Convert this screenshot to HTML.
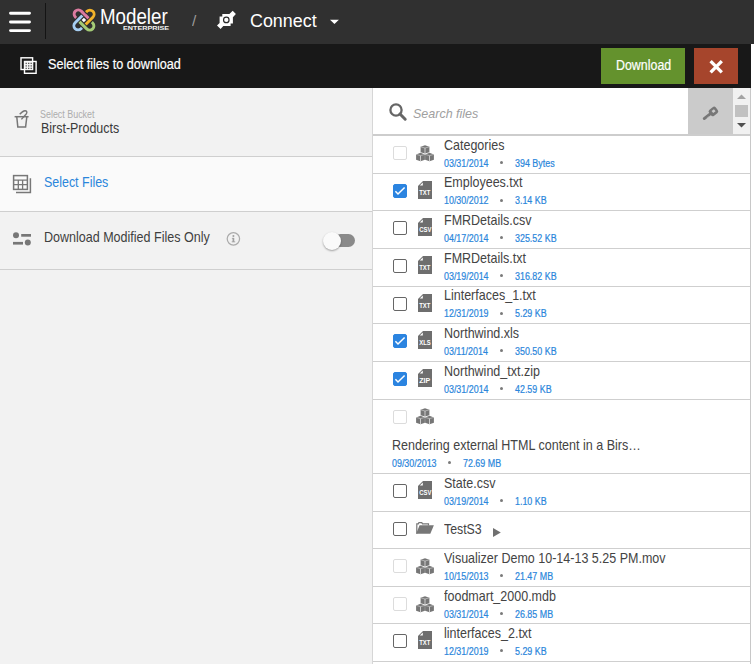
<!DOCTYPE html>
<html><head><meta charset="utf-8">
<style>
*{margin:0;padding:0;box-sizing:border-box}
html,body{width:754px;height:664px;overflow:hidden;background:#fff;font-family:"Liberation Sans",sans-serif}
.a{position:absolute}
.t{position:absolute;white-space:nowrap;line-height:1}
#hdr{left:0;top:0;width:754px;height:44px;background:#303030}
#tb{left:0;top:44px;width:751px;height:44px;background:#181818}
#lp{left:0;top:88px;width:372px;height:576px;background:#f2f2f2}
#rp{left:372px;top:88px;width:379px;height:576px;background:#fff;border-left:1px solid #d6d6d6;border-right:1px solid #c8c8c8}
.hl{position:absolute;height:1px;background:#cfcfcf}
.cb{position:absolute;width:14px;height:14px;border:1.5px solid #666;border-radius:2px;background:#fff}
.cb.d{border-color:#dcdcdc}
.cb.c{background:#2b84e0;border-color:#2b84e0}
.nm{font-size:13px;color:#333}
.dt{font-size:10px;color:#2a86db}
</style></head><body>
<!-- header -->
<div id="hdr" class="a"></div>
<svg class="a" style="left:0;top:0" width="44" height="44" viewBox="0 0 44 44"><path d="M10.5,13.3 H29.5 M10.5,22 H29.5 M10.5,30.6 H29.5" stroke="#fff" stroke-width="2.9" stroke-linecap="round"/></svg>
<div class="a" style="left:45px;top:3px;width:1px;height:36px;background:#141414"></div>

<svg class="a" style="left:68px;top:4px" width="32" height="32" viewBox="0 0 32 32">
 <g fill="none" stroke-linecap="butt"><path d="M8.2,13.9 L7.33,13.07 A4.2,4.2 0 0 1 13.27,7.13 L20.6,14.4" stroke="#303030" stroke-width="4.2"/><path d="M8.2,13.9 L7.33,13.07 A4.2,4.2 0 0 1 13.27,7.13 L20.6,14.4" stroke="#dc7ba0" stroke-width="2.9"/><path d="M8.2,13.9 L7.33,13.07 A4.2,4.2 0 0 1 13.27,7.13 L20.6,14.4" stroke="#303030" stroke-width="4.2" transform="rotate(90 16 16)"/><path d="M8.2,13.9 L7.33,13.07 A4.2,4.2 0 0 1 13.27,7.13 L20.6,14.4" stroke="#f2b32a" stroke-width="2.9" transform="rotate(90 16 16)"/><path d="M8.2,13.9 L7.33,13.07 A4.2,4.2 0 0 1 13.27,7.13 L20.6,14.4" stroke="#303030" stroke-width="4.2" transform="rotate(180 16 16)"/><path d="M8.2,13.9 L7.33,13.07 A4.2,4.2 0 0 1 13.27,7.13 L20.6,14.4" stroke="#a4cb76" stroke-width="2.9" transform="rotate(180 16 16)"/><path d="M8.2,13.9 L7.33,13.07 A4.2,4.2 0 0 1 13.27,7.13 L20.6,14.4" stroke="#303030" stroke-width="4.2" transform="rotate(270 16 16)"/><path d="M8.2,13.9 L7.33,13.07 A4.2,4.2 0 0 1 13.27,7.13 L20.6,14.4" stroke="#a6cef2" stroke-width="2.9" transform="rotate(270 16 16)"/><path d="M14.9,8.76 L17.0,10.88" stroke="#303030" stroke-width="4.2"/><path d="M14.6,8.46 L17.3,11.18" stroke="#dc7ba0" stroke-width="2.9"/></g>
 <rect x="14.3" y="14.3" width="3.2" height="3.2" fill="#fff" transform="rotate(45 15.9 15.9)"/>
</svg>

<svg class="a" style="left:215px;top:9px" width="24" height="22" viewBox="0 0 24 22">
 <path d="M7.3,5 L14.4,5 L17.7,1.8 L20.9,5 L17.9,8.2 L17.9,14.6 L15.6,14.6 L15.6,16.9 L8.3,16.9 L5.6,19.9 L2,16.6 L4.6,14 L4.6,7.6 L7.3,7.6 Z" fill="#fff"/>
 <circle cx="11.3" cy="10.9" r="2.75" fill="none" stroke="#2a2a2a" stroke-width="1.2"/>
</svg>
<svg class="a" style="left:329px;top:19px" width="11" height="6" viewBox="0 0 11 6"><path d="M1,0.8 H9.9 L5.45,5.1 Z" fill="#fff"/></svg>

<!-- toolbar -->
<div id="tb" class="a"></div>
<svg class="a" style="left:16px;top:52px" width="26" height="26" viewBox="0 0 26 26">
 <rect x="5" y="5.8" width="11.6" height="11.7" fill="none" stroke="#fff" stroke-width="1.4"/>
 <rect x="8.5" y="9.5" width="11.6" height="11.8" fill="none" stroke="#fff" stroke-width="1.4"/>
 <rect x="8.5" y="9.5" width="8.1" height="8" fill="#f4f4f4"/>
 <g fill="#555"><rect x="9.549999999999999" y="10.75" width="1.3" height="1.3"/><rect x="12.049999999999999" y="10.75" width="1.3" height="1.3"/><rect x="14.549999999999999" y="10.75" width="1.3" height="1.3"/><rect x="9.549999999999999" y="13.25" width="1.3" height="1.3"/><rect x="12.049999999999999" y="13.25" width="1.3" height="1.3"/><rect x="14.549999999999999" y="13.25" width="1.3" height="1.3"/><rect x="9.549999999999999" y="15.749999999999998" width="1.3" height="1.3"/><rect x="12.049999999999999" y="15.749999999999998" width="1.3" height="1.3"/><rect x="14.549999999999999" y="15.749999999999998" width="1.3" height="1.3"/></g>
</svg>
<div class="a" style="left:601px;top:48px;width:84px;height:36px;background:#64922d"></div>
<div class="a" style="left:694px;top:48px;width:44px;height:36px;background:#a6452c"></div>
<svg class="a" style="left:709px;top:59px" width="15" height="16" viewBox="0 0 15 16"><path d="M1.6,2.2 L12.8,13.4 M12.8,2.2 L1.6,13.4" stroke="#fff" stroke-width="3.3"/></svg>

<!-- left panel -->
<div id="lp" class="a"></div>
<div class="a" style="left:0;top:156px;width:372px;height:55px;background:#fafafa"></div>
<div class="hl" style="left:0;top:156px;width:372px"></div>
<div class="hl" style="left:0;top:211px;width:372px"></div>
<div class="hl" style="left:0;top:269px;width:372px"></div>

<svg class="a" style="left:12px;top:108px" width="20" height="22" viewBox="0 0 20 22">
 <path d="M2.6,8.7 H16.6" stroke="#777" stroke-width="1.5"/>
 <path d="M4.8,9 L5.8,18.9 H13.6 L14.8,9" fill="none" stroke="#777" stroke-width="1.5"/>
 <path d="M9.4,11.4 L14.2,6 C15.6,4.2 14.6,2.6 12.9,2.7 C11.3,2.8 9.2,4.6 7.7,6.3" fill="none" stroke="#777" stroke-width="1.4"/>
</svg>

<svg class="a" style="left:12px;top:174px" width="20" height="20" viewBox="0 0 20 20">
 <rect x="1.6" y="1.6" width="13.8" height="13.8" fill="none" stroke="#777" stroke-width="1.5"/>
 <path d="M1.6,6.1 H15.4 M1.6,10.6 H15.4 M6.3,6.1 V15.4 M10.6,6.1 V15.4" stroke="#777" stroke-width="1.3"/>
 <path d="M18.4,4.2 V18.5 H4" fill="none" stroke="#777" stroke-width="1.5"/>
</svg>

<svg class="a" style="left:12px;top:231px" width="20" height="16" viewBox="0 0 20 16">
 <circle cx="4" cy="4.3" r="3" fill="#777"/><rect x="9.2" y="3" width="9.8" height="2.7" fill="#777"/>
 <rect x="1" y="10.9" width="10" height="2.7" fill="#777"/><circle cx="15.8" cy="11.6" r="3" fill="#777"/>
</svg>
<svg class="a" style="left:226px;top:231px" width="15" height="16" viewBox="0 0 15 16">
 <circle cx="7.4" cy="7.85" r="6.2" fill="none" stroke="#ababab" stroke-width="1.25"/>
 <g fill="#a0a0a0"><circle cx="7.4" cy="5" r="1.05"/><rect x="6.55" y="6.9" width="1.7" height="4"/><rect x="5.7" y="10.4" width="3.5" height="0.9"/><rect x="5.9" y="6.9" width="1.5" height="0.8"/></g>
</svg>
<div class="a" style="left:334px;top:234px;width:21px;height:13px;border-radius:7px;background:#8a8a8a"></div>
<div class="a" style="left:323px;top:232px;width:18px;height:18px;border-radius:50%;background:#fafafa;box-shadow:0 1px 2px rgba(0,0,0,.35)"></div>

<!-- right panel -->
<div id="rp" class="a"></div>
<div class="t" style="left:99.90px;top:6.75px;font-size:21.5px;color:#fff;transform:scaleX(0.8715);transform-origin:0 0;">Modeler</div>
<div class="t" style="left:122.80px;top:25.40px;font-size:6.2px;color:#f0f0f0;transform:scaleX(1.1661);transform-origin:0 0;font-weight:bold;">ENTERPRISE</div>
<div class="t" style="left:192.40px;top:13.00px;font-size:15px;color:#9a9a9a;transform:scaleX(1.0312);transform-origin:0 0;">/</div>
<div class="t" style="left:250.00px;top:11.80px;font-size:18px;color:#fff;transform:scaleX(0.9933);transform-origin:0 0;">Connect</div>
<div class="t" style="left:48.00px;top:56.65px;font-size:14.7px;color:#fff;transform:scaleX(0.8612);transform-origin:0 0;-webkit-text-stroke:0.2px #fff;">Select files to download</div>
<div class="t" style="left:615.60px;top:57.80px;font-size:14px;color:#fff;transform:scaleX(0.8866);transform-origin:0 0;-webkit-text-stroke:0.2px #fff;">Download</div>
<div class="t" style="left:40.30px;top:110.30px;font-size:10px;color:#adadad;transform:scaleX(0.8914);transform-origin:0 0;">Select Bucket</div>
<div class="t" style="left:40.80px;top:120.60px;font-size:14px;color:#3a3a3a;transform:scaleX(0.8896);transform-origin:0 0;">Birst-Products</div>
<div class="t" style="left:44.00px;top:174.75px;font-size:14.5px;color:#2a86db;transform:scaleX(0.8581);transform-origin:0 0;">Select Files</div>
<div class="t" style="left:44.10px;top:229.65px;font-size:14.5px;color:#3f3f3f;transform:scaleX(0.8639);transform-origin:0 0;">Download Modified Files Only</div>
<div class="a" style="left:373px;top:88px;width:377px;height:46px;background:#fff"></div>
<div class="a" style="left:373px;top:134px;width:377px;height:2px;background:#cdcdcd"></div>
<svg class="a" style="left:388px;top:102px" width="20" height="20" viewBox="0 0 20 20"><circle cx="8" cy="8" r="5.6" fill="none" stroke="#666" stroke-width="2.3"/><path d="M12,12 L17.2,17.2" stroke="#666" stroke-width="3" stroke-linecap="round"/></svg>
<div class="t" style="left:413.30px;top:107.05px;font-size:13.5px;color:#a0a0a0;font-style:italic;transform:scaleX(0.9257);transform-origin:0 0;">Search files</div>
<div class="a" style="left:688px;top:88px;width:45px;height:46px;background:#cbcbcb"></div>
<svg class="a" style="left:700px;top:103px" width="21" height="19" viewBox="0 0 21 19"><g transform="translate(13.4 8.4) rotate(-38)"><rect x="-4.3" y="-3.8" width="8.6" height="7.6" rx="2.3" fill="#777"/><rect x="-1.2" y="-1.4" width="3" height="2.6" fill="#cbcbcb"/><rect x="-13" y="-1.45" width="9.5" height="2.9" rx="1.3" fill="#777"/><rect x="-9" y="0.9" width="0.8" height="0.6" fill="#cbcbcb"/><rect x="-7" y="0.9" width="0.8" height="0.6" fill="#cbcbcb"/></g></svg>
<div class="a" style="left:733px;top:88px;width:17px;height:46px;background:#f1f1f1"></div>
<svg class="a" style="left:733px;top:88px" width="17" height="46" viewBox="0 0 17 46"><path d="M4,11 H13 L8.5,6.5 Z" fill="#a3a3a3"/><rect x="2" y="17" width="13" height="12" fill="#c1c1c1"/><path d="M4,35 H13 L8.5,39.5 Z" fill="#505050"/></svg>
<div class="hl" style="left:373px;top:173px;width:377px"></div>
<div class="cb d" style="left:393px;top:146px"></div>
<svg class="a" style="left:416px;top:145px" width="19" height="17" viewBox="0 0 19 17"><path d="M4.6,1.8 L9,0.2 L13.4,1.8 V7.2 L9,8.6 L4.6,7.2 Z" fill="#767676"/><path d="M4.6,1.8 L9,3.0 L13.4,1.8" fill="none" stroke="#c8c8c8" stroke-width="0.7"/><path d="M9,3.0 V8.6" fill="none" stroke="#d8d8d8" stroke-width="0.9"/><path d="M0.09999999999999964,9.4 L4.5,7.8 L8.9,9.4 V14.8 L4.5,16.2 L0.09999999999999964,14.8 Z" fill="#767676"/><path d="M0.09999999999999964,9.4 L4.5,10.6 L8.9,9.4" fill="none" stroke="#c8c8c8" stroke-width="0.7"/><path d="M4.5,10.6 V16.2" fill="none" stroke="#d8d8d8" stroke-width="0.9"/><path d="M9.1,9.4 L13.5,7.8 L17.9,9.4 V14.8 L13.5,16.2 L9.1,14.8 Z" fill="#767676"/><path d="M9.1,9.4 L13.5,10.6 L17.9,9.4" fill="none" stroke="#c8c8c8" stroke-width="0.7"/><path d="M13.5,10.6 V16.2" fill="none" stroke="#d8d8d8" stroke-width="0.9"/></svg>
<div class="t" style="left:443.90px;top:137.95px;font-size:14.5px;color:#444;transform:scaleX(0.8625);transform-origin:0 0;">Categories</div>
<div class="t" style="left:443.60px;top:159.10px;font-size:10px;color:#2a86db;transform:scaleX(0.8900);transform-origin:0 0;-webkit-text-stroke:0.2px #2a86db;">03/31/2014</div>
<div class="a" style="left:500px;top:161px;width:3px;height:3px;border-radius:50%;background:#7a7a7a"></div>
<div class="t" style="left:514.70px;top:159.10px;font-size:10px;color:#2a86db;transform:scaleX(0.8900);transform-origin:0 0;-webkit-text-stroke:0.2px #2a86db;">394 Bytes</div>
<div class="hl" style="left:373px;top:210px;width:377px"></div>
<div class="cb c" style="left:393px;top:184px"></div>
<svg class="a" style="left:393px;top:184px" width="14" height="14" viewBox="0 0 14 14"><path d="M2.4,7.3 L5,10 L11.6,3.5" fill="none" stroke="#fff" stroke-width="1.5"/></svg>
<svg class="a" style="left:418px;top:181px" width="14" height="18" viewBox="0 0 14 18"><path d="M5,0 H14 V18 H0 V5 Z" fill="#6e6e6e"/><path d="M1.8,4.5 L4.8,1.5 V4.5 Z" fill="#fff"/><text x="1.2" y="14" font-size="6.4" font-weight="bold" fill="#fff" font-family="Liberation Sans" textLength="11.2" lengthAdjust="spacingAndGlyphs">TXT</text></svg>
<div class="t" style="left:443.90px;top:174.95px;font-size:14.5px;color:#444;transform:scaleX(0.8625);transform-origin:0 0;">Employees.txt</div>
<div class="t" style="left:443.60px;top:196.10px;font-size:10px;color:#2a86db;transform:scaleX(0.8900);transform-origin:0 0;-webkit-text-stroke:0.2px #2a86db;">10/30/2012</div>
<div class="a" style="left:500px;top:199px;width:3px;height:3px;border-radius:50%;background:#7a7a7a"></div>
<div class="t" style="left:514.70px;top:196.10px;font-size:10px;color:#2a86db;transform:scaleX(0.8900);transform-origin:0 0;-webkit-text-stroke:0.2px #2a86db;">3.14 KB</div>
<div class="hl" style="left:373px;top:248px;width:377px"></div>
<div class="cb" style="left:393px;top:221px"></div>
<svg class="a" style="left:418px;top:218px" width="14" height="18" viewBox="0 0 14 18"><path d="M5,0 H14 V18 H0 V5 Z" fill="#6e6e6e"/><path d="M1.8,4.5 L4.8,1.5 V4.5 Z" fill="#fff"/><text x="1.2" y="14" font-size="6.4" font-weight="bold" fill="#fff" font-family="Liberation Sans" textLength="12.2" lengthAdjust="spacingAndGlyphs">CSV</text></svg>
<div class="t" style="left:443.90px;top:212.95px;font-size:14.5px;color:#444;transform:scaleX(0.8625);transform-origin:0 0;">FMRDetails.csv</div>
<div class="t" style="left:443.60px;top:234.10px;font-size:10px;color:#2a86db;transform:scaleX(0.8900);transform-origin:0 0;-webkit-text-stroke:0.2px #2a86db;">04/17/2014</div>
<div class="a" style="left:500px;top:236px;width:3px;height:3px;border-radius:50%;background:#7a7a7a"></div>
<div class="t" style="left:514.70px;top:234.10px;font-size:10px;color:#2a86db;transform:scaleX(0.8900);transform-origin:0 0;-webkit-text-stroke:0.2px #2a86db;">325.52 KB</div>
<div class="hl" style="left:373px;top:286px;width:377px"></div>
<div class="cb" style="left:393px;top:259px"></div>
<svg class="a" style="left:418px;top:256px" width="14" height="18" viewBox="0 0 14 18"><path d="M5,0 H14 V18 H0 V5 Z" fill="#6e6e6e"/><path d="M1.8,4.5 L4.8,1.5 V4.5 Z" fill="#fff"/><text x="1.2" y="14" font-size="6.4" font-weight="bold" fill="#fff" font-family="Liberation Sans" textLength="11.2" lengthAdjust="spacingAndGlyphs">TXT</text></svg>
<div class="t" style="left:443.90px;top:250.95px;font-size:14.5px;color:#444;transform:scaleX(0.8625);transform-origin:0 0;">FMRDetails.txt</div>
<div class="t" style="left:443.60px;top:272.10px;font-size:10px;color:#2a86db;transform:scaleX(0.8900);transform-origin:0 0;-webkit-text-stroke:0.2px #2a86db;">03/19/2014</div>
<div class="a" style="left:500px;top:274px;width:3px;height:3px;border-radius:50%;background:#7a7a7a"></div>
<div class="t" style="left:514.70px;top:272.10px;font-size:10px;color:#2a86db;transform:scaleX(0.8900);transform-origin:0 0;-webkit-text-stroke:0.2px #2a86db;">316.82 KB</div>
<div class="hl" style="left:373px;top:323px;width:377px"></div>
<div class="cb" style="left:393px;top:297px"></div>
<svg class="a" style="left:418px;top:294px" width="14" height="18" viewBox="0 0 14 18"><path d="M5,0 H14 V18 H0 V5 Z" fill="#6e6e6e"/><path d="M1.8,4.5 L4.8,1.5 V4.5 Z" fill="#fff"/><text x="1.2" y="14" font-size="6.4" font-weight="bold" fill="#fff" font-family="Liberation Sans" textLength="11.2" lengthAdjust="spacingAndGlyphs">TXT</text></svg>
<div class="t" style="left:443.90px;top:287.95px;font-size:14.5px;color:#444;transform:scaleX(0.8625);transform-origin:0 0;">Linterfaces_1.txt</div>
<div class="t" style="left:443.60px;top:309.10px;font-size:10px;color:#2a86db;transform:scaleX(0.8900);transform-origin:0 0;-webkit-text-stroke:0.2px #2a86db;">12/31/2019</div>
<div class="a" style="left:500px;top:312px;width:3px;height:3px;border-radius:50%;background:#7a7a7a"></div>
<div class="t" style="left:514.70px;top:309.10px;font-size:10px;color:#2a86db;transform:scaleX(0.8900);transform-origin:0 0;-webkit-text-stroke:0.2px #2a86db;">5.29 KB</div>
<div class="hl" style="left:373px;top:361px;width:377px"></div>
<div class="cb c" style="left:393px;top:334px"></div>
<svg class="a" style="left:393px;top:334px" width="14" height="14" viewBox="0 0 14 14"><path d="M2.4,7.3 L5,10 L11.6,3.5" fill="none" stroke="#fff" stroke-width="1.5"/></svg>
<svg class="a" style="left:418px;top:331px" width="14" height="18" viewBox="0 0 14 18"><path d="M5,0 H14 V18 H0 V5 Z" fill="#6e6e6e"/><path d="M1.8,4.5 L4.8,1.5 V4.5 Z" fill="#fff"/><text x="1.2" y="14" font-size="6.4" font-weight="bold" fill="#fff" font-family="Liberation Sans" textLength="11.5" lengthAdjust="spacingAndGlyphs">XLS</text></svg>
<div class="t" style="left:443.90px;top:325.95px;font-size:14.5px;color:#444;transform:scaleX(0.8625);transform-origin:0 0;">Northwind.xls</div>
<div class="t" style="left:443.60px;top:347.10px;font-size:10px;color:#2a86db;transform:scaleX(0.8900);transform-origin:0 0;-webkit-text-stroke:0.2px #2a86db;">03/11/2014</div>
<div class="a" style="left:500px;top:349px;width:3px;height:3px;border-radius:50%;background:#7a7a7a"></div>
<div class="t" style="left:514.70px;top:347.10px;font-size:10px;color:#2a86db;transform:scaleX(0.8900);transform-origin:0 0;-webkit-text-stroke:0.2px #2a86db;">350.50 KB</div>
<div class="hl" style="left:373px;top:399px;width:377px"></div>
<div class="cb c" style="left:393px;top:372px"></div>
<svg class="a" style="left:393px;top:372px" width="14" height="14" viewBox="0 0 14 14"><path d="M2.4,7.3 L5,10 L11.6,3.5" fill="none" stroke="#fff" stroke-width="1.5"/></svg>
<svg class="a" style="left:418px;top:369px" width="14" height="18" viewBox="0 0 14 18"><path d="M5,0 H14 V18 H0 V5 Z" fill="#6e6e6e"/><path d="M1.8,4.5 L4.8,1.5 V4.5 Z" fill="#fff"/><text x="1.2" y="14" font-size="6.4" font-weight="bold" fill="#fff" font-family="Liberation Sans" textLength="11" lengthAdjust="spacingAndGlyphs">ZIP</text></svg>
<div class="t" style="left:443.90px;top:363.95px;font-size:14.5px;color:#444;transform:scaleX(0.8625);transform-origin:0 0;">Northwind_txt.zip</div>
<div class="t" style="left:443.60px;top:385.10px;font-size:10px;color:#2a86db;transform:scaleX(0.8900);transform-origin:0 0;-webkit-text-stroke:0.2px #2a86db;">03/31/2014</div>
<div class="a" style="left:500px;top:387px;width:3px;height:3px;border-radius:50%;background:#7a7a7a"></div>
<div class="t" style="left:514.70px;top:385.10px;font-size:10px;color:#2a86db;transform:scaleX(0.8900);transform-origin:0 0;-webkit-text-stroke:0.2px #2a86db;">42.59 KB</div>
<div class="hl" style="left:373px;top:473px;width:377px"></div>
<div class="cb d" style="left:393px;top:410px"></div>
<svg class="a" style="left:416px;top:408px" width="19" height="17" viewBox="0 0 19 17"><path d="M4.6,1.8 L9,0.2 L13.4,1.8 V7.2 L9,8.6 L4.6,7.2 Z" fill="#767676"/><path d="M4.6,1.8 L9,3.0 L13.4,1.8" fill="none" stroke="#c8c8c8" stroke-width="0.7"/><path d="M9,3.0 V8.6" fill="none" stroke="#d8d8d8" stroke-width="0.9"/><path d="M0.09999999999999964,9.4 L4.5,7.8 L8.9,9.4 V14.8 L4.5,16.2 L0.09999999999999964,14.8 Z" fill="#767676"/><path d="M0.09999999999999964,9.4 L4.5,10.6 L8.9,9.4" fill="none" stroke="#c8c8c8" stroke-width="0.7"/><path d="M4.5,10.6 V16.2" fill="none" stroke="#d8d8d8" stroke-width="0.9"/><path d="M9.1,9.4 L13.5,7.8 L17.9,9.4 V14.8 L13.5,16.2 L9.1,14.8 Z" fill="#767676"/><path d="M9.1,9.4 L13.5,10.6 L17.9,9.4" fill="none" stroke="#c8c8c8" stroke-width="0.7"/><path d="M13.5,10.6 V16.2" fill="none" stroke="#d8d8d8" stroke-width="0.9"/></svg>
<div class="t" style="left:391.70px;top:437.95px;font-size:14.5px;color:#444;transform:scaleX(0.8639);transform-origin:0 0;">Rendering external HTML content in a Birs…</div>
<div class="t" style="left:391.70px;top:459.10px;font-size:10px;color:#2a86db;transform:scaleX(0.8900);transform-origin:0 0;-webkit-text-stroke:0.2px #2a86db;">09/30/2013</div>
<div class="a" style="left:448px;top:461px;width:3px;height:3px;border-radius:50%;background:#7a7a7a"></div>
<div class="t" style="left:463.00px;top:459.10px;font-size:10px;color:#2a86db;transform:scaleX(0.8900);transform-origin:0 0;-webkit-text-stroke:0.2px #2a86db;">72.69 MB</div>
<div class="hl" style="left:373px;top:511px;width:377px"></div>
<div class="cb" style="left:393px;top:484px"></div>
<svg class="a" style="left:418px;top:481px" width="14" height="18" viewBox="0 0 14 18"><path d="M5,0 H14 V18 H0 V5 Z" fill="#6e6e6e"/><path d="M1.8,4.5 L4.8,1.5 V4.5 Z" fill="#fff"/><text x="1.2" y="14" font-size="6.4" font-weight="bold" fill="#fff" font-family="Liberation Sans" textLength="12.2" lengthAdjust="spacingAndGlyphs">CSV</text></svg>
<div class="t" style="left:443.90px;top:475.95px;font-size:14.5px;color:#444;transform:scaleX(0.8625);transform-origin:0 0;">State.csv</div>
<div class="t" style="left:443.60px;top:497.10px;font-size:10px;color:#2a86db;transform:scaleX(0.8900);transform-origin:0 0;-webkit-text-stroke:0.2px #2a86db;">03/19/2014</div>
<div class="a" style="left:500px;top:499px;width:3px;height:3px;border-radius:50%;background:#7a7a7a"></div>
<div class="t" style="left:514.70px;top:497.10px;font-size:10px;color:#2a86db;transform:scaleX(0.8900);transform-origin:0 0;-webkit-text-stroke:0.2px #2a86db;">1.10 KB</div>
<div class="hl" style="left:373px;top:548px;width:377px"></div>
<div class="cb" style="left:393px;top:522px"></div>
<svg class="a" style="left:416px;top:522px" width="19" height="13" viewBox="0 0 19 13"><path d="M0.8,11.8 V1.9 H2.3 L2.9,0.6 H5.8 L6.5,1.8 H12.5 V3.6" fill="none" stroke="#777" stroke-width="1.2"/><path d="M3.55,3.35 H17.9 L14.3,11.8 H0.2 Z" fill="#777"/></svg>
<div class="t" style="left:444.00px;top:521.95px;font-size:14.5px;color:#444;transform:scaleX(0.8505);transform-origin:0 0;">TestS3</div>
<svg class="a" style="left:492px;top:528px" width="10" height="10" viewBox="0 0 10 10"><path d="M1,0.1 L8.8,4.5 L1,8.9 Z" fill="#707070"/></svg>
<div class="hl" style="left:373px;top:586px;width:377px"></div>
<div class="cb d" style="left:393px;top:559px"></div>
<svg class="a" style="left:416px;top:558px" width="19" height="17" viewBox="0 0 19 17"><path d="M4.6,1.8 L9,0.2 L13.4,1.8 V7.2 L9,8.6 L4.6,7.2 Z" fill="#767676"/><path d="M4.6,1.8 L9,3.0 L13.4,1.8" fill="none" stroke="#c8c8c8" stroke-width="0.7"/><path d="M9,3.0 V8.6" fill="none" stroke="#d8d8d8" stroke-width="0.9"/><path d="M0.09999999999999964,9.4 L4.5,7.8 L8.9,9.4 V14.8 L4.5,16.2 L0.09999999999999964,14.8 Z" fill="#767676"/><path d="M0.09999999999999964,9.4 L4.5,10.6 L8.9,9.4" fill="none" stroke="#c8c8c8" stroke-width="0.7"/><path d="M4.5,10.6 V16.2" fill="none" stroke="#d8d8d8" stroke-width="0.9"/><path d="M9.1,9.4 L13.5,7.8 L17.9,9.4 V14.8 L13.5,16.2 L9.1,14.8 Z" fill="#767676"/><path d="M9.1,9.4 L13.5,10.6 L17.9,9.4" fill="none" stroke="#c8c8c8" stroke-width="0.7"/><path d="M13.5,10.6 V16.2" fill="none" stroke="#d8d8d8" stroke-width="0.9"/></svg>
<div class="t" style="left:443.90px;top:550.95px;font-size:14.5px;color:#444;transform:scaleX(0.8625);transform-origin:0 0;">Visualizer Demo 10-14-13 5.25 PM.mov</div>
<div class="t" style="left:443.60px;top:572.10px;font-size:10px;color:#2a86db;transform:scaleX(0.8900);transform-origin:0 0;-webkit-text-stroke:0.2px #2a86db;">10/15/2013</div>
<div class="a" style="left:500px;top:574px;width:3px;height:3px;border-radius:50%;background:#7a7a7a"></div>
<div class="t" style="left:514.70px;top:572.10px;font-size:10px;color:#2a86db;transform:scaleX(0.8900);transform-origin:0 0;-webkit-text-stroke:0.2px #2a86db;">21.47 MB</div>
<div class="hl" style="left:373px;top:623px;width:377px"></div>
<div class="cb d" style="left:393px;top:597px"></div>
<svg class="a" style="left:416px;top:596px" width="19" height="17" viewBox="0 0 19 17"><path d="M4.6,1.8 L9,0.2 L13.4,1.8 V7.2 L9,8.6 L4.6,7.2 Z" fill="#767676"/><path d="M4.6,1.8 L9,3.0 L13.4,1.8" fill="none" stroke="#c8c8c8" stroke-width="0.7"/><path d="M9,3.0 V8.6" fill="none" stroke="#d8d8d8" stroke-width="0.9"/><path d="M0.09999999999999964,9.4 L4.5,7.8 L8.9,9.4 V14.8 L4.5,16.2 L0.09999999999999964,14.8 Z" fill="#767676"/><path d="M0.09999999999999964,9.4 L4.5,10.6 L8.9,9.4" fill="none" stroke="#c8c8c8" stroke-width="0.7"/><path d="M4.5,10.6 V16.2" fill="none" stroke="#d8d8d8" stroke-width="0.9"/><path d="M9.1,9.4 L13.5,7.8 L17.9,9.4 V14.8 L13.5,16.2 L9.1,14.8 Z" fill="#767676"/><path d="M9.1,9.4 L13.5,10.6 L17.9,9.4" fill="none" stroke="#c8c8c8" stroke-width="0.7"/><path d="M13.5,10.6 V16.2" fill="none" stroke="#d8d8d8" stroke-width="0.9"/></svg>
<div class="t" style="left:443.90px;top:588.95px;font-size:14.5px;color:#444;transform:scaleX(0.8625);transform-origin:0 0;">foodmart_2000.mdb</div>
<div class="t" style="left:443.60px;top:610.10px;font-size:10px;color:#2a86db;transform:scaleX(0.8900);transform-origin:0 0;-webkit-text-stroke:0.2px #2a86db;">03/31/2014</div>
<div class="a" style="left:500px;top:612px;width:3px;height:3px;border-radius:50%;background:#7a7a7a"></div>
<div class="t" style="left:514.70px;top:610.10px;font-size:10px;color:#2a86db;transform:scaleX(0.8900);transform-origin:0 0;-webkit-text-stroke:0.2px #2a86db;">26.85 MB</div>
<div class="hl" style="left:373px;top:661px;width:377px"></div>
<div class="cb" style="left:393px;top:634px"></div>
<svg class="a" style="left:418px;top:631px" width="14" height="18" viewBox="0 0 14 18"><path d="M5,0 H14 V18 H0 V5 Z" fill="#6e6e6e"/><path d="M1.8,4.5 L4.8,1.5 V4.5 Z" fill="#fff"/><text x="1.2" y="14" font-size="6.4" font-weight="bold" fill="#fff" font-family="Liberation Sans" textLength="11.2" lengthAdjust="spacingAndGlyphs">TXT</text></svg>
<div class="t" style="left:443.90px;top:625.95px;font-size:14.5px;color:#444;transform:scaleX(0.8625);transform-origin:0 0;">linterfaces_2.txt</div>
<div class="t" style="left:443.60px;top:647.10px;font-size:10px;color:#2a86db;transform:scaleX(0.8900);transform-origin:0 0;-webkit-text-stroke:0.2px #2a86db;">12/31/2019</div>
<div class="a" style="left:500px;top:649px;width:3px;height:3px;border-radius:50%;background:#7a7a7a"></div>
<div class="t" style="left:514.70px;top:647.10px;font-size:10px;color:#2a86db;transform:scaleX(0.8900);transform-origin:0 0;-webkit-text-stroke:0.2px #2a86db;">5.29 KB</div>
</body></html>
